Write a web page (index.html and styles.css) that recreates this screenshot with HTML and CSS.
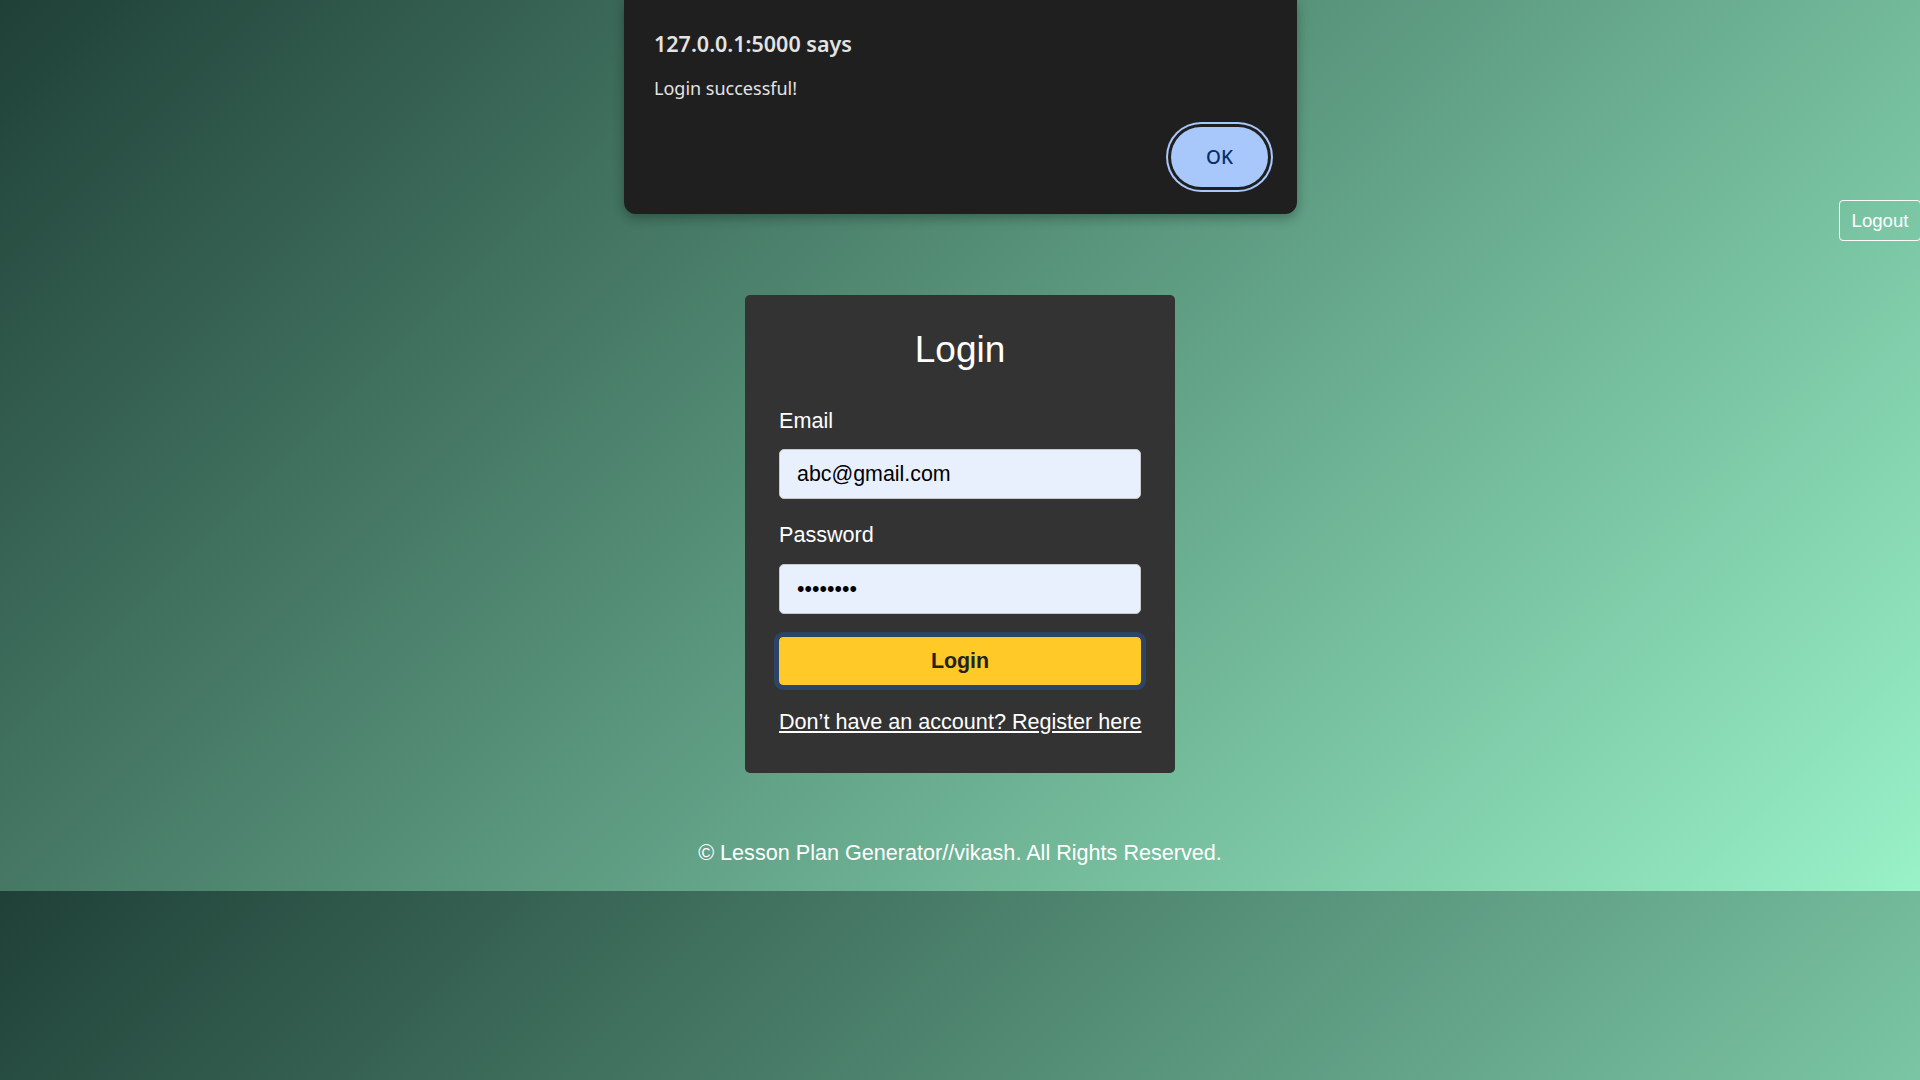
FILE: index.html
```html
<!DOCTYPE html>
<html lang="en">
<head>
<meta charset="utf-8">
<title>Login - Lesson Plan Generator</title>
<link rel="stylesheet" href="styles.css">
</head>
<body>
  <header class="topbar">
    <button class="logout" type="button">Logout</button>
  </header>

  <main class="card">
    <h2 class="card-title">Login</h2>
    <form class="form">
      <label class="label" for="email">Email</label>
      <input class="input" id="email" type="email" value="abc@gmail.com">
      <label class="label label-pw" for="password">Password</label>
      <input class="input" id="password" type="password" value="12345678">
      <button class="submit" type="button">Login</button>
    </form>
    <a class="register" href="#">Don’t have an account? Register here</a>
  </main>

  <footer class="footer">© Lesson Plan Generator//vikash. All Rights Reserved.</footer>

  <div class="alert" role="alertdialog">
    <div class="alert-title">127.0.0.1:5000 says</div>
    <div class="alert-msg">Login successful!</div>
    <div class="alert-actions">
      <button class="alert-ok" type="button">OK</button>
    </div>
  </div>
</body>
</html>
```

FILE: styles.css
```css
html {
  margin: 0;
}

body {
  margin: 0;
  height: 891px;
  font-family: "Liberation Sans", Arial, sans-serif;
  color: #fff;
  background: linear-gradient(135deg, #1f4037, #99f2c8);
}

.topbar {
  display: flex;
  justify-content: flex-end;
  padding-top: 200px;
}

.logout {
  height: 41px;
  width: 82px;
  margin-right: -1px;
  padding: 0;
  border: 1px solid #fff;
  border-radius: 4px;
  background: transparent;
  color: #fff;
  font-family: "Liberation Sans", Arial, sans-serif;
  font-size: 18.6px;
}

.card {
  box-sizing: border-box;
  width: 430px;
  margin: 54px auto 0;
  padding: 35px 34px 39px;
  background: #333333;
  border-radius: 5px;
}

.card-title {
  margin: 0;
  font-size: 37px;
  line-height: 40px;
  font-weight: 400;
  text-align: center;
  color: #fff;
}

.form {
  display: flex;
  flex-direction: column;
  padding-top: 39px;
}

.label {
  font-size: 21.6px;
  line-height: 24px;
  color: #fff;
  margin-bottom: 16px;
}

.label-pw {
  margin-top: 24px;
  margin-bottom: 17px;
}

.input {
  box-sizing: border-box;
  height: 50px;
  width: 100%;
  margin: 0;
  padding: 0 17px;
  border: 1px solid #c8c8c8;
  border-radius: 5px;
  background: #e8f0fe;
  color: #000;
  font-family: "Liberation Sans", Arial, sans-serif;
  font-size: 21.4px;
  outline: none;
}

.submit {
  height: 48px;
  margin-top: 23px;
  padding: 0;
  border: none;
  border-radius: 4px;
  background: #ffc928;
  color: #222;
  font-family: "Liberation Sans", Arial, sans-serif;
  font-size: 21.4px;
  font-weight: 700;
  outline: 5px solid #2c4468;
  outline-offset: 0;
}

.register {
  display: block;
  margin-top: 25px;
  font-size: 21.6px;
  line-height: 24px;
  color: #fff;
  text-decoration: underline;
  white-space: nowrap;
}

.footer {
  margin-top: 68px;
  text-align: center;
  font-size: 21.6px;
  line-height: 24px;
  color: #fff;
}

/* Browser alert dialog overlay */
.alert {
  position: absolute;
  top: 0;
  left: 624px;
  box-sizing: border-box;
  width: 673px;
  height: 214px;
  padding: 28px 29px 0 30px;
  background: #1f1f1f;
  border-radius: 0 0 12px 12px;
  box-shadow: 0 4px 12px rgba(0, 0, 0, 0.3);
  font-family: "Noto Sans", "Open Sans", sans-serif;
  color: #e3e3e3;
}

.alert-title {
  font-size: 21.5px;
  line-height: 32px;
  font-weight: 600;
  color: #e3e3e3;
}

.alert-msg {
  margin-top: 16px;
  font-size: 18px;
  line-height: 24px;
  color: #e3e3e3;
}

.alert-actions {
  display: flex;
  justify-content: flex-end;
  margin-top: 27px;
}

.alert-ok {
  width: 97px;
  height: 60px;
  padding: 0;
  border: none;
  border-radius: 30px;
  background: #a8c7fa;
  color: #062e6f;
  font-family: "Noto Sans", "Open Sans", sans-serif;
  font-size: 19px;
  font-weight: 500;
  box-shadow: 0 0 0 3px #1f1f1f, 0 0 0 5px #a8c7fa;
}
```
